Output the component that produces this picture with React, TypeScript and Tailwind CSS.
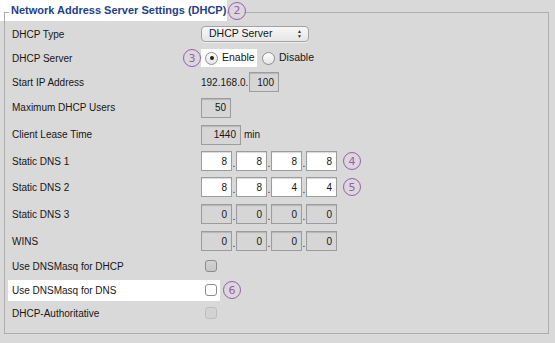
import type { ReactNode } from 'react';

function Marker({ n }: { n: number }) {
  return (
    <span className="flex h-[18px] w-[18px] shrink-0 items-center justify-center rounded-full border-[1.5px] border-[#9d5ab5] bg-[#d9d9d9] font-['DejaVu_Sans',sans-serif] text-[11px] leading-none text-[#9d5ab5]">
      {n}
    </span>
  );
}

function Row({ label, h, children }: { label: string; h: string; children?: ReactNode }) {
  return (
    <div className={`flex items-center pl-[7px] ${h}`}>
      <div className="w-[189px] shrink-0">{label}</div>
      <div className="flex items-center">{children}</div>
    </div>
  );
}

function Box({ value, white, w = 'w-[31px]' }: { value: string; white?: boolean; w?: string }) {
  return (
    <div
      className={`flex h-[20px] ${w} items-center justify-end border border-[#9c9c9c] pr-[4px] shadow-[inset_0_1px_1px_rgba(0,0,0,0.15)] ${
        white ? 'bg-white' : 'bg-[#d6d6d6]'
      }`}
    >
      {value}
    </div>
  );
}

function Quad({ parts, white }: { parts: string[]; white?: boolean }) {
  return (
    <div className="flex items-end">
      {parts.map((p, i) => (
        <div key={i} className="flex items-end">
          <Box value={p} white={white} />
          {i < 3 && <span className="w-[4px] pb-[2px] text-center leading-none">.</span>}
        </div>
      ))}
    </div>
  );
}

function Radio({ checked }: { checked?: boolean }) {
  return (
    <span className="flex h-[13px] w-[13px] items-center justify-center rounded-full border border-[#8e8e8e] bg-gradient-to-b from-[#ffffff] to-[#e4e4e4]">
      {checked && <span className="h-[4px] w-[4px] rounded-full bg-[#222]" />}
    </span>
  );
}

function Check({ tone }: { tone: 'gray' | 'white' | 'off' }) {
  const cls =
    tone === 'white'
      ? 'border-[#8c8c8c] bg-white'
      : tone === 'gray'
        ? 'border-[#8c8c8c] bg-gradient-to-b from-[#d2d2d2] to-[#c6c6c6]'
        : 'border-[#bdbdbd] bg-[#d3d3d3]';
  return <span className={`block h-[12px] w-[12px] rounded-[3px] border ${cls}`} />;
}

export default function App() {
  return (
    <div className="relative h-[343px] w-[555px] overflow-hidden bg-[#d9d9d9] pl-[4px] pt-[12px] font-['Liberation_Sans',Arial,sans-serif] text-[10px] text-[#161616]">
      <div className="absolute left-0 top-0 h-[21px] w-[227px] bg-white" />

      <div className="relative h-[322px] w-[545px] border border-[#aeaeae] pt-[9px]">
        <div className="absolute left-[4px] top-[-13px] flex h-[21px] items-center">
          <span className="flex h-[21px] w-[218px] items-center bg-white pl-[2px] text-[11px] font-bold text-[#22418a]">
            Network Address Server Settings (DHCP)
          </span>
          <span className="ml-[1px]">
            <Marker n={2} />
          </span>
        </div>

        <Row label="DHCP Type" h="h-[24px]">
          <div className="flex h-[16px] w-[108px] items-center justify-between rounded-[4px] border border-[#a2a2a2] bg-gradient-to-b from-[#f7f7f7] to-[#e6e6e6] pl-[7px] pr-[6px] text-[10.5px] shadow-[0_1px_0_rgba(255,255,255,0.6)]">
            <span>DHCP Server</span>
            <span className="flex flex-col items-center text-[5px] leading-[5px] text-[#333]">
              <span>▲</span>
              <span>▼</span>
            </span>
          </div>
        </Row>

        <Row label="DHCP Server" h="h-[24px]">
          <div className="relative flex items-center">
            <span className="absolute left-[-18px]">
              <Marker n={3} />
            </span>
            <div className="flex h-[18px] w-[56px] items-center gap-[4px] bg-white pl-[4px]">
              <Radio checked />
              <span className="text-[10.5px]">Enable</span>
            </div>
            <div className="ml-[5px] flex items-center gap-[4px]">
              <Radio />
              <span className="text-[10.5px]">Disable</span>
            </div>
          </div>
        </Row>

        <Row label="Start IP Address" h="h-[24px]">
          <span className="w-[48px]">192.168.0.</span>
          <Box value="100" w="w-[30px]" />
        </Row>

        <Row label="Maximum DHCP Users" h="h-[27px]">
          <Box value="50" w="w-[30px]" />
        </Row>

        <Row label="Client Lease Time" h="h-[27px]">
          <Box value="1440" w="w-[40px]" />
          <span className="ml-[3px]">min</span>
        </Row>

        <Row label="Static DNS 1" h="h-[26px]">
          <Quad parts={['8', '8', '8', '8']} white />
          <span className="ml-[6px]">
            <Marker n={4} />
          </span>
        </Row>

        <Row label="Static DNS 2" h="h-[26px]">
          <Quad parts={['8', '8', '4', '4']} white />
          <span className="ml-[6px]">
            <Marker n={5} />
          </span>
        </Row>

        <Row label="Static DNS 3" h="h-[28px]">
          <Quad parts={['0', '0', '0', '0']} />
        </Row>

        <Row label="WINS" h="h-[26px]">
          <Quad parts={['0', '0', '0', '0']} />
        </Row>

        <Row label="Use DNSMasq for DHCP" h="h-[24px]">
          <span className="ml-[4px]">
            <Check tone="gray" />
          </span>
        </Row>

        <div className="flex h-[24px] items-center pl-[3px]">
          <div className="flex h-[21px] w-[212px] items-center bg-white pl-[4px]">
            <div className="w-[193px] shrink-0">Use DNSMasq for DNS</div>
            <Check tone="white" />
          </div>
          <span className="ml-[3px]">
            <Marker n={6} />
          </span>
        </div>

        <Row label="DHCP-Authoritative" h="h-[22px]">
          <span className="ml-[4px]">
            <Check tone="off" />
          </span>
        </Row>
      </div>
    </div>
  );
}
